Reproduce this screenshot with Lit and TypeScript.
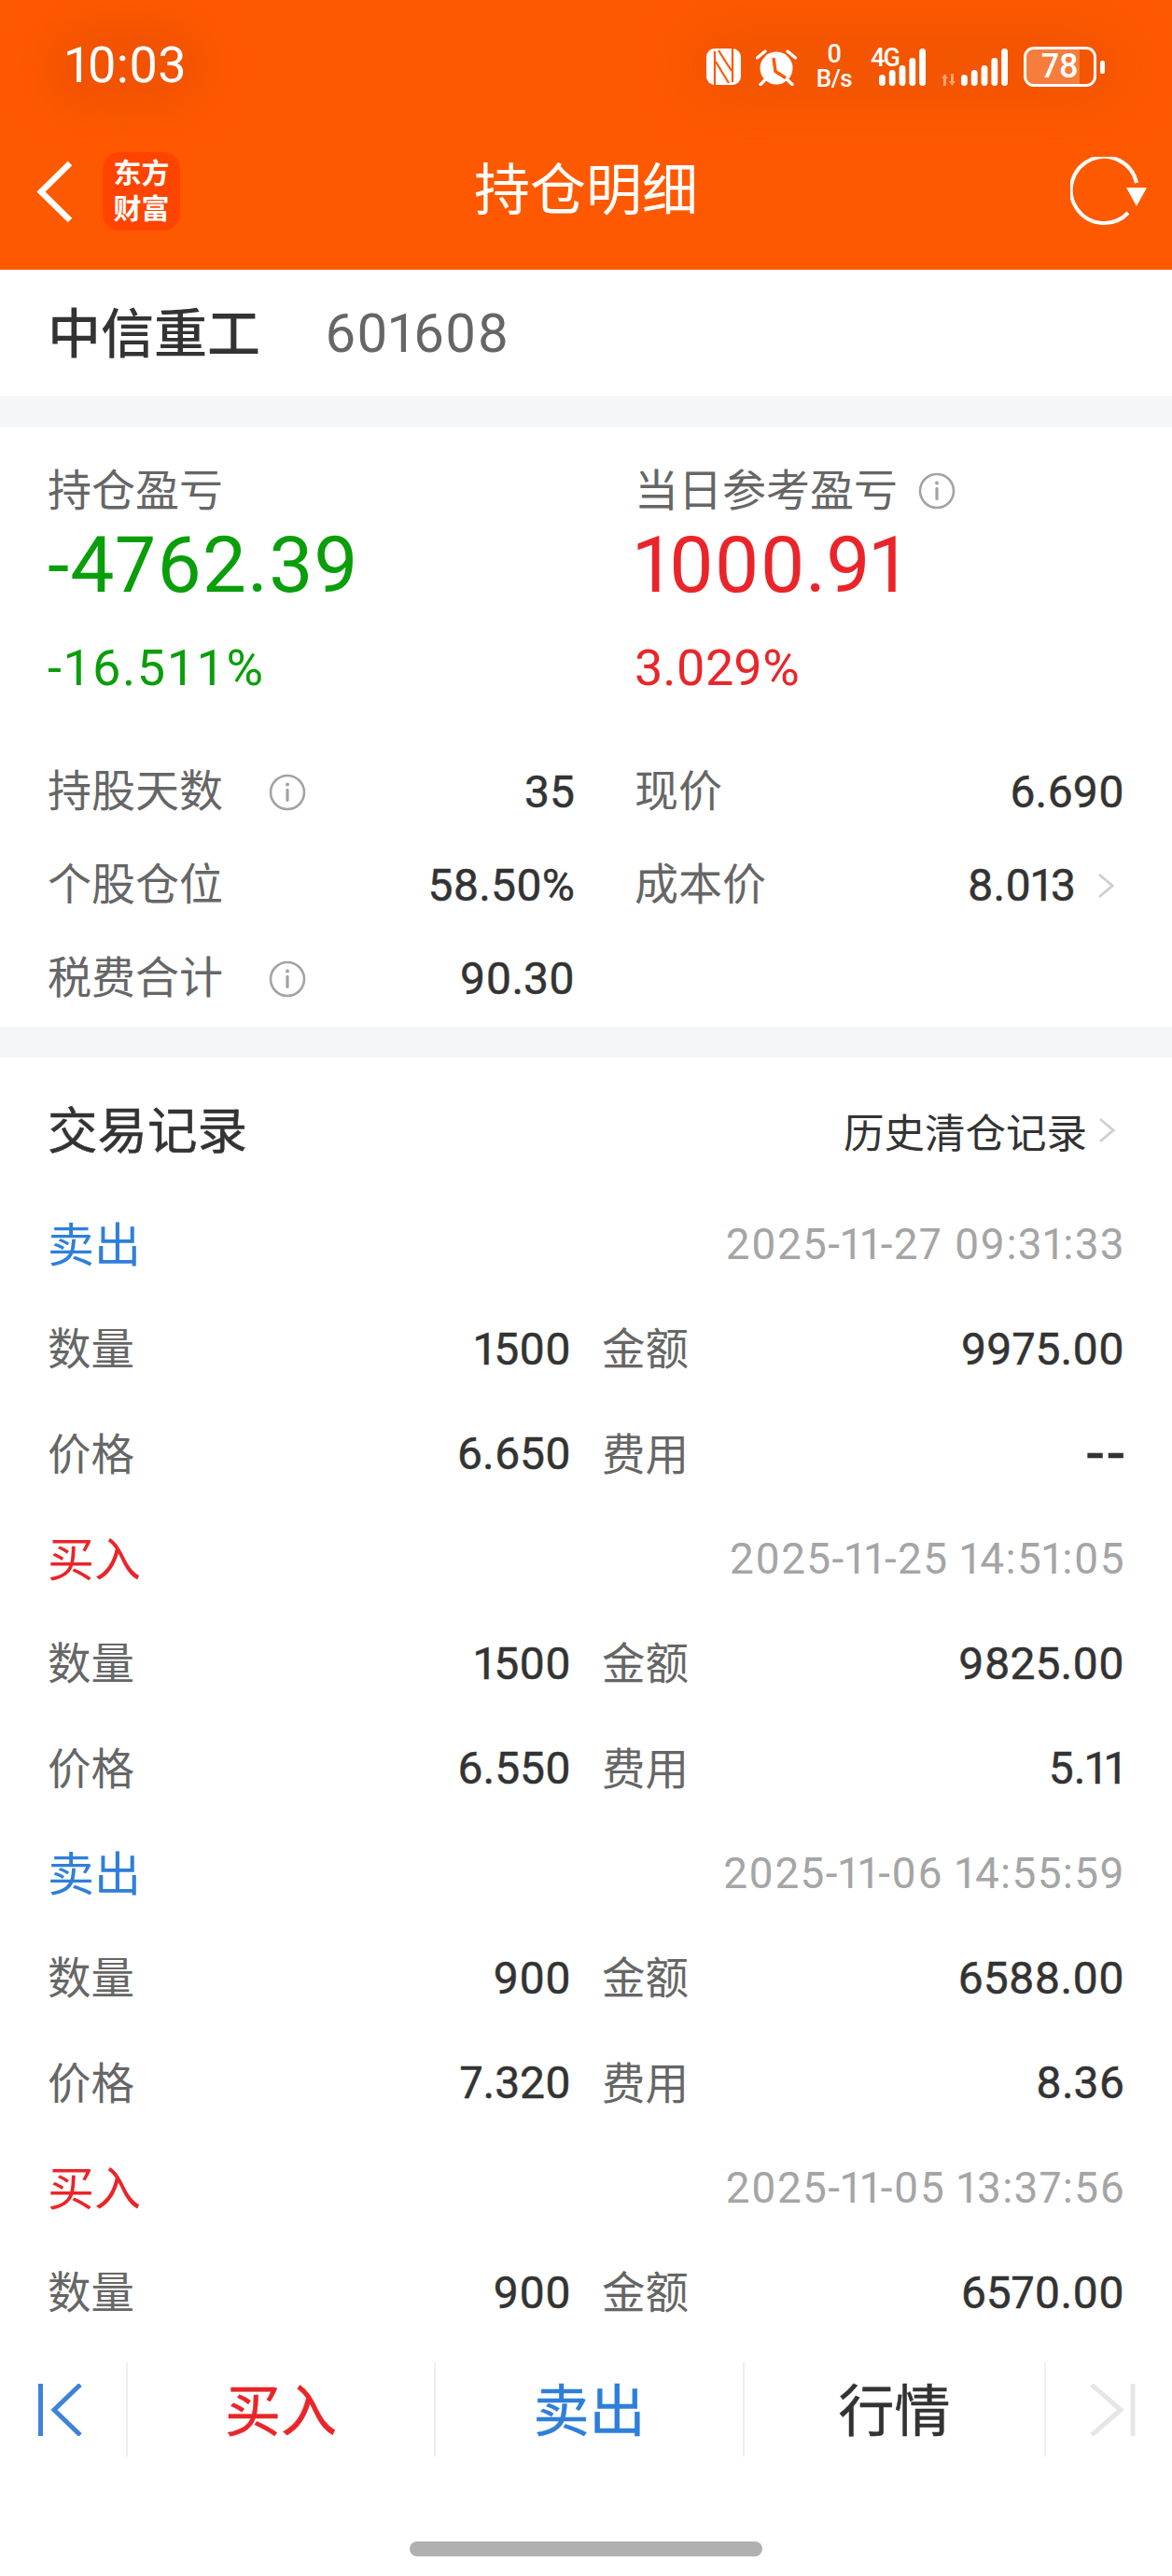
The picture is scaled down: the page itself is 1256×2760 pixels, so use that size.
import { LitElement, html, css, svg } from "lit";
import { customElement } from "lit/decorators.js";

const info = html`<svg class="info" viewBox="0 0 40 40"><circle cx="20" cy="20" r="18" fill="none" stroke="#a3a3a3" stroke-width="2.6"/><circle cx="20" cy="11.5" r="2" fill="#a3a3a3"/><rect x="18.4" y="16" width="3.2" height="14" rx="1.4" fill="#a3a3a3"/></svg>`;
const chev = html`<svg class="chev" viewBox="0 0 18 28"><path d="M2 2l14 12L2 26" fill="none" stroke="#cfcfcf" stroke-width="2.8"/></svg>`;

const bars = (hs: number[]) => svg`${hs.map(
  (h, i) => svg`<rect x=${i * 10.8} y=${40 - h} width="6.800" height=${h} rx="3.400" fill="#fff"/>`
)}`;

const trades = [
  { side: "卖出", buy: false, time: "2025-11-27 09:31:33", qty: "1500", amt: "9975.00", price: "6.650", fee: "--" },
  { side: "买入", buy: true, time: "2025-11-25 14:51:05", qty: "1500", amt: "9825.00", price: "6.550", fee: "5.11" },
  { side: "卖出", buy: false, time: "2025-11-06 14:55:59", qty: "900", amt: "6588.00", price: "7.320", fee: "8.36" },
  { side: "买入", buy: true, time: "2025-11-05 13:37:56", qty: "900", amt: "6570.00" },
];

@customElement("app-root")
export class AppRoot extends LitElement {
  static styles = css`
    :host {
      display: block;
      width: 1256px;
      height: 2760px;
      overflow: hidden;
      background: #fff;
      font-family: Roboto, "Noto Sans CJK SC", sans-serif;
      font-variant-numeric: proportional-nums;
      color: #333;
    }
    .page { display: flex; flex-direction: column; height: 2760px; }
    header { height: 289px; background: #ff5900; color: #fff; flex: none; }
    .status { height: 130px; display: flex; justify-content: space-between; align-items: flex-start; }
    .time {
      margin: 43px 0 0 70px; font-size: 54px; line-height: 54px; height: 54px;
      background: rgba(222, 76, 0, 0.4); border-radius: 30px;
      box-shadow: 0 0 40px 22px rgba(222, 76, 0, 0.4);
    }
    .sys {
      margin: 48px 72px 0 0; display: flex; align-items: flex-start; height: 46px;
      background: rgba(222, 76, 0, 0.35); border-radius: 30px;
      box-shadow: 0 0 50px 24px rgba(222, 76, 0, 0.35);
    }
    .sys svg { display: block; flex: none; }
    .nfc { width: 37px; height: 39px; margin-top: 4px; }
    .alarm { width: 44px; height: 40px; margin: 4px 0 0 16px; }
    .speed { width: 40px; margin-left: 20px; text-align: center; font-weight: 500; font-size: 26px; line-height: 22px; margin-top: -1px; white-space: nowrap; letter-spacing: -0.5px; }
    .speed b { display: block; font-weight: 500; font-size: 27px; height: 26px; line-height: 22px; }
    .sig1 { position: relative; width: 59px; height: 44px; margin-left: 19px; }
    .sig1 svg { width: 50px; height: 40px; margin: 4px 0 0 9px; }
    .g4 { position: absolute; left: 0; top: 3px; font-size: 27px; line-height: 22px; font-weight: 500; letter-spacing: -1.8px; }
    .arrows { width: 15px; height: 13px; margin: 31px 0 0 17px; opacity: 0.45; }
    .sig2 { width: 50px; height: 40px; margin: 4px 0 0 6px; }
    .batt {
      width: 78px; height: 43px; box-sizing: border-box; margin: 2px 0 0 17px; border: 3px solid #fff; border-radius: 11px;
      display: flex; overflow: hidden; background: linear-gradient(90deg, rgba(255,255,255,.24) 57px, transparent 57px);
      justify-content: center; align-items: center; font-size: 36px; line-height: 37px; font-weight: 500;
    }
    .nub { width: 5px; height: 14px; border-radius: 2px; background: #fff; margin: 17px 0 0 4px; }
    .nav { height: 150px; padding: 0 39px; display: grid; grid-template-columns: 1fr auto 1fr; align-items: center; }
    .nav-l { display: flex; align-items: center; }
    .back { width: 39px; height: 67px; display: block; }
    .logo {
      width: 83px; height: 84px; margin-left: 32px; border-radius: 18px; background: #ff4400;
      font-size: 30px; line-height: 38px; font-weight: 700; text-align: center; display: flex; flex-direction: column; justify-content: center;
    }
    .title { font-size: 60px; line-height: 70px; }
    .refresh { width: 82px; height: 74px; display: block; justify-self: end; margin-right: -12px; }

    .stock { height: 135px; flex: none; display: flex; align-items: center; padding-left: 51px; box-sizing: border-box; }
    .stock b { font-size: 57px; font-weight: 500; color: #333; padding-bottom: 7px; }
    .stock span { font-size: 58px; color: #666; margin-left: 69px; letter-spacing: 0.9px; }
    .band { background: #f5f6f8; flex: none; }
    .b1 { height: 34px; }
    .b2 { height: 33px; }

    .sum { flex: none; height: 642px; box-sizing: border-box; padding: 35px 51px 0; display: grid; grid-template-columns: 565px 525px; column-gap: 64px; }
    .label { font-size: 47px; color: #666; line-height: 60px; height: 60px; display: flex; align-items: center; padding-top: 3px; margin-bottom: -3px; }
    .big { font-size: 84px; line-height: 100px; margin-top: 3px; }
    .big.green { letter-spacing: 1px; }
    .pct { font-size: 54px; line-height: 70px; margin-top: 25px; }
    .pct.green { font-variant-numeric: tabular-nums; letter-spacing: 1.500px; }
    .green { color: #0a9e0a; }
    .red { color: #ea2529; }
    .blue { color: #2f7fd9; }
    .stats { grid-column: 1 / 3; margin-top: 46px; display: grid; grid-template-columns: 565px 525px; column-gap: 64px; grid-auto-rows: 100px; }
    .stat { display: flex; align-items: center; justify-content: space-between; font-size: 47px; color: #666; }
    .stat .k { display: flex; align-items: center; }
    .stat .k > span { padding-bottom: 11px; }
    .stat .v { color: #333; font-size: 48px; -webkit-text-stroke: 0.5px #333; display: flex; align-items: center; }
    .info { width: 40px; height: 40px; display: block; }
    .k .info { margin-left: 49px; }
    .label .info { margin-left: 22px; }
    .chev { width: 18px; height: 28px; display: block; }
    .v .chev { margin: 0 11px 0 23px; }

    .list { flex: 1; min-height: 0; overflow: hidden; }
    .list-h { height: 144px; box-sizing: border-box; padding: 12px 51px 0; display: flex; align-items: center; justify-content: space-between; }
    .list-h b { font-size: 53.500px; font-weight: 400; -webkit-text-stroke: 0.5px #333; color: #333; padding-bottom: 7px; }
    .hist { font-size: 43.500px; display: flex; align-items: center; color: #333; }
    .hist .chev { margin: 0 10px 0 12px; }
    .head, .row { height: 112.330px; padding: 0 51px; display: flex; align-items: center; justify-content: space-between; }
    .side { font-size: 50px; padding-bottom: 7px; }
    .date { font-size: 46px; color: #a5a5a5; letter-spacing: 1.300px; margin-right: -1px; }
    .row { display: grid; grid-template-columns: 561px 560px; column-gap: 33px; }
    .cell { display: flex; justify-content: space-between; align-items: center; font-size: 46.500px; color: #666; }
    .cell span { padding-bottom: 7px; }
    .cell b { font-weight: 400; font-size: 48px; -webkit-text-stroke: 0.5px #333; color: #333; }
    .cell b.dash { font-size: 66px; letter-spacing: 4px; margin-right: -4px; }

    .bar { flex: none; height: 260px; background: #fff; box-sizing: border-box; padding-top: 31px; }
    .tabs { display: grid; grid-template-columns: 135px 330px 331px 323px 1fr; height: 101px; }
    .tab { display: flex; align-items: center; justify-content: center; font-size: 60px; border-left: 2px solid #eee; }
    .tab:first-child { border-left: none; }
    .tab span { padding-bottom: 6px; -webkit-text-stroke: 0.5px currentColor; }
    .tab svg { display: block; }
    .home { width: 378px; height: 16px; border-radius: 8px; background: #b0b0b0; margin: 91px auto 0; }
  `;

  render() {
    return html`<div class="page">
      <header>
        <div class="status">
          <div class="time">10:03</div>
          <div class="sys">
            <svg class="nfc" viewBox="0 0 37 39">
              <rect width="37" height="39" rx="9" fill="#fff"/>
              <path d="M9 3v36M28 0v36M13 2l14 22M10 14l14 23" fill="none" stroke="#ff5900" stroke-width="2.200"/>
            </svg>
            <svg class="alarm" viewBox="0 0 44 40">
              <circle cx="22" cy="21" r="17.500" fill="#fff"/>
              <path d="M1.500 10L10 3M42.500 10L34 3M5 38.500l5-5M39 38.500l-5-5" stroke="#fff" stroke-width="3.400" stroke-linecap="round"/>
              <path d="M19 10l2 14.500 11 7" fill="none" stroke="#ff5900" stroke-width="3.400"/>
            </svg>
            <div class="speed"><b>0</b>B/s</div>
            <div class="sig1"><span class="g4">4G</span><svg viewBox="0 0 50 40">${bars([12, 17, 22, 30, 40])}</svg></div>
            <svg class="arrows" viewBox="0 0 15 13"><path d="M3.500 0L7 5H5v8H2V5H0zM11.500 13L15 8h-2V0h-3v8H8z" fill="#fff"/></svg>
            <svg class="sig2" viewBox="0 0 50 40">${bars([12, 17, 22, 30, 40])}</svg>
            <div class="batt">78</div>
            <div class="nub"></div>
          </div>
        </div>
        <div class="nav">
          <div class="nav-l">
            <svg class="back" viewBox="0 0 39 67"><path d="M36 3L5 33.500 36 64" fill="none" stroke="#fff" stroke-width="6.500"/></svg>
            <div class="logo"><span>东方</span><span>财富</span></div>
          </div>
          <div class="title">持仓明细</div>
          <svg class="refresh" viewBox="0 0 82 74">
            <path d="M62 60A35.500 35.500 0 1 1 71 28" fill="none" stroke="#fff" stroke-width="4"/>
            <path d="M60 33h22l-11 20z" fill="#fff"/>
          </svg>
        </div>
      </header>

      <div class="stock"><b>中信重工</b><span>601608</span></div>
      <div class="band b1"></div>

      <section class="sum">
        <div>
          <div class="label">持仓盈亏</div>
          <div class="big green">-4762.39</div>
          <div class="pct green">-16.511%</div>
        </div>
        <div>
          <div class="label">当日参考盈亏${info}</div>
          <div class="big red">1000.91</div>
          <div class="pct red">3.029%</div>
        </div>
        <div class="stats">
          <div class="stat"><span class="k"><span>持股天数</span>${info}</span><span class="v">35</span></div>
          <div class="stat"><span class="k"><span>现价</span></span><span class="v">6.690</span></div>
          <div class="stat"><span class="k"><span>个股仓位</span></span><span class="v">58.50%</span></div>
          <div class="stat"><span class="k"><span>成本价</span></span><span class="v">8.013${chev}</span></div>
          <div class="stat"><span class="k"><span>税费合计</span>${info}</span><span class="v">90.30</span></div>
        </div>
      </section>
      <div class="band b2"></div>

      <section class="list">
        <div class="list-h"><b>交易记录</b><span class="hist">历史清仓记录${chev}</span></div>
        ${trades.map(
          (t) => html`
            <div class="head"><span class="side ${t.buy ? "red" : "blue"}">${t.side}</span><span class="date">${t.time}</span></div>
            <div class="row">
              <div class="cell"><span>数量</span><b>${t.qty}</b></div>
              <div class="cell"><span>金额</span><b>${t.amt}</b></div>
            </div>
            ${t.price
              ? html`<div class="row">
                  <div class="cell"><span>价格</span><b>${t.price}</b></div>
                  <div class="cell"><span>费用</span><b class=${t.fee === "--" ? "dash" : ""}>${t.fee}</b></div>
                </div>`
              : ""}
          `
        )}
      </section>

      <footer class="bar">
        <div class="tabs">
          <div class="tab"><svg width="135" height="56" viewBox="0 0 135 56"><path d="M43.500 0v56" stroke="#3f83d8" stroke-width="5"/><path d="M86 1L58 28l28 27" fill="none" stroke="#3f83d8" stroke-width="5"/></svg></div>
          <div class="tab red"><span>买入</span></div>
          <div class="tab blue"><span>卖出</span></div>
          <div class="tab"><span>行情</span></div>
          <div class="tab"><svg width="135" height="56" viewBox="0 0 135 56"><path d="M49 1l31 27-31 27" fill="none" stroke="#e6e6e6" stroke-width="5"/><path d="M93 0v56" stroke="#e6e6e6" stroke-width="5"/></svg></div>
        </div>
        <div class="home"></div>
      </footer>
    </div>`;
  }
}
